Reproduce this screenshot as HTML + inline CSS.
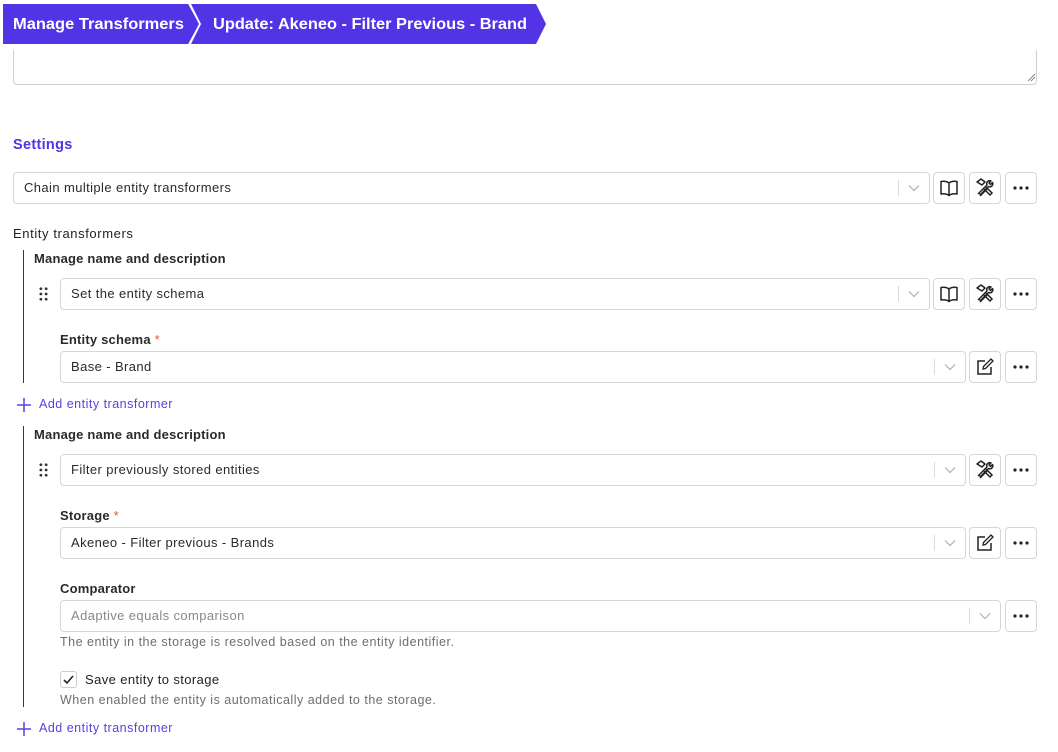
<!DOCTYPE html>
<html><head><meta charset="utf-8"><style>
*{box-sizing:border-box;margin:0;padding:0}
body{width:1058px;height:752px;background:#fff;font-family:"Liberation Sans",sans-serif;color:#222;position:relative;overflow:hidden}
.a{position:absolute}
.sel{position:absolute;height:32px;border:1px solid #d6d6d6;border-radius:4px;background:#fff;font-size:13px;letter-spacing:0.4px;line-height:30px;padding-left:10px;color:#2a2a2a}
.sel .sep{position:absolute;right:30px;top:7px;width:1px;height:16px;background:#dcdcdc}
.sel svg.ch{position:absolute;right:9px;top:11px}
.btn{position:absolute;width:32px;height:32px;border:1px solid #d6d6d6;border-radius:4px;background:#fff;display:flex;align-items:center;justify-content:center}
.lbl{position:absolute;font-size:13px;font-weight:bold;letter-spacing:0.2px;color:#2a2a2a}
.req{color:#e5533d;font-weight:normal}
.help{position:absolute;font-size:12.5px;letter-spacing:0.5px;color:#6e6e6e}
.add{position:absolute;font-size:12.5px;letter-spacing:0.5px;color:#5a3fe0}
.vl{position:absolute;left:23px;width:1px;background:#3a3a3a}
</style></head><body>
<svg class="a" style="left:3px;top:4px" width="545" height="40">
<polygon points="0,0 186,0 196,20 186,40 0,40" fill="#5233e6"/>
<polygon points="188,0 533,0 543,20 533,40 188,40 198,20" fill="#5233e6"/>
<polyline points="186,0 197,20 186,40" fill="none" stroke="#fff" stroke-width="1.5"/>
<text x="10" y="25" fill="#fff" font-family="Liberation Sans" font-weight="bold" font-size="15.5" textLength="171" lengthAdjust="spacingAndGlyphs">Manage Transformers</text>
<text x="210" y="25" fill="#fff" font-family="Liberation Sans" font-weight="bold" font-size="15.5" textLength="314" lengthAdjust="spacingAndGlyphs">Update: Akeneo - Filter Previous - Brand</text>
</svg>
<div class="a" style="left:13px;top:50px;width:1024px;height:35px;border:1px solid #cfcfcf;border-top:none;border-radius:0 0 4px 4px"></div>
<svg class="a" style="left:1027px;top:73px" width="9" height="9"><path d="M1 8L8 1M4 8L8 4" stroke="#888" stroke-width="1"/></svg>
<div class="a" style="left:13px;top:137px;font-size:14.5px;font-weight:bold;letter-spacing:0.3px;color:#5233e6">Settings</div>

<svg width="0" height="0" style="position:absolute"><defs>
<symbol id="chev" viewBox="0 0 12 8"><path d="M1 1.5L6 6.5L11 1.5" fill="none" stroke="#bbb" stroke-width="1.4"/></symbol>
<symbol id="book" viewBox="0 0 20 18"><path d="M10 4C8 2.5 5 2 2 2.5V15C5 14.5 8 15 10 16.5C12 15 15 14.5 18 15V2.5C15 2 12 2.5 10 4ZM10 4V16.5" fill="none" stroke="#222" stroke-width="1.5" stroke-linejoin="round"/></symbol>
<symbol id="tools" viewBox="0 0 20 20"><path d="M3 16L11 8M5 18L13 10M2 4L6 1L10 4L7 7ZM16 3a3 3 0 0 0-4 4L4 15l1.5 1.5 8-8a3 3 0 0 0 4-4l-2 2-1.5-1.5z" fill="none" stroke="#222" stroke-width="1.5" stroke-linejoin="round"/><path d="M9 11l6 6 2-2-6-6" fill="none" stroke="#222" stroke-width="1.5"/></symbol>
<symbol id="dots" viewBox="0 0 16 4"><circle cx="2" cy="2" r="1.6" fill="#222"/><circle cx="8" cy="2" r="1.6" fill="#222"/><circle cx="14" cy="2" r="1.6" fill="#222"/></symbol>
<symbol id="edit" viewBox="0 0 18 18"><path d="M9 3H2V16H15V9" fill="none" stroke="#222" stroke-width="1.5"/><path d="M7 11L7.5 8.5L15 1L17 3L9.5 10.5Z" fill="none" stroke="#222" stroke-width="1.3"/></symbol>
<symbol id="drag" viewBox="0 0 10 16"><circle cx="2" cy="2" r="1.6" fill="#333"/><circle cx="8" cy="2" r="1.6" fill="#333"/><circle cx="2" cy="8" r="1.6" fill="#333"/><circle cx="8" cy="8" r="1.6" fill="#333"/><circle cx="2" cy="14" r="1.6" fill="#333"/><circle cx="8" cy="14" r="1.6" fill="#333"/></symbol>
<symbol id="plus" viewBox="0 0 14 14"><path d="M7 0V14M0 7H14" stroke="#5a3fe0" stroke-width="1.5"/></symbol>
</defs></svg>

<div class="sel" style="left:13px;top:172px;width:917px">Chain multiple entity transformers<span class="sep"></span><svg class="ch" width="12" height="8"><use href="#chev"/></svg></div>
<div class="btn" style="left:933px;top:172px"><svg width="20" height="18"><use href="#book"/></svg></div>
<div class="btn" style="left:969px;top:172px"><svg width="20" height="20"><use href="#tools"/></svg></div>
<div class="btn" style="left:1005px;top:172px"><svg width="16" height="4"><use href="#dots"/></svg></div>

<div class="lbl" style="left:13px;top:226px;font-weight:normal;letter-spacing:0.6px;color:#222">Entity transformers</div>
<div class="vl" style="top:250px;height:133px"></div>
<div class="lbl" style="left:34px;top:251px">Manage name and description</div>
<svg class="a" style="left:39px;top:287px" width="9" height="14"><use href="#drag"/></svg>
<div class="sel" style="left:60px;top:278px;width:870px">Set the entity schema<span class="sep"></span><svg class="ch" width="12" height="8"><use href="#chev"/></svg></div>
<div class="btn" style="left:933px;top:278px"><svg width="20" height="18"><use href="#book"/></svg></div>
<div class="btn" style="left:969px;top:278px"><svg width="20" height="20"><use href="#tools"/></svg></div>
<div class="btn" style="left:1005px;top:278px"><svg width="16" height="4"><use href="#dots"/></svg></div>
<div class="lbl" style="left:60px;top:332px">Entity schema <span class="req">*</span></div>
<div class="sel" style="left:60px;top:351px;width:906px">Base - Brand<span class="sep"></span><svg class="ch" width="12" height="8"><use href="#chev"/></svg></div>
<div class="btn" style="left:969px;top:351px"><svg width="18" height="18"><use href="#edit"/></svg></div>
<div class="btn" style="left:1005px;top:351px"><svg width="16" height="4"><use href="#dots"/></svg></div>
<svg class="a" style="left:17px;top:398px" width="14" height="14"><use href="#plus"/></svg>
<div class="add" style="left:39px;top:397px">Add entity transformer</div>

<div class="vl" style="top:426px;height:281px"></div>
<div class="lbl" style="left:34px;top:427px">Manage name and description</div>
<svg class="a" style="left:39px;top:463px" width="9" height="14"><use href="#drag"/></svg>
<div class="sel" style="left:60px;top:454px;width:906px">Filter previously stored entities<span class="sep"></span><svg class="ch" width="12" height="8"><use href="#chev"/></svg></div>
<div class="btn" style="left:969px;top:454px"><svg width="20" height="20"><use href="#tools"/></svg></div>
<div class="btn" style="left:1005px;top:454px"><svg width="16" height="4"><use href="#dots"/></svg></div>
<div class="lbl" style="left:60px;top:508px">Storage <span class="req">*</span></div>
<div class="sel" style="left:60px;top:527px;width:906px">Akeneo - Filter previous - Brands<span class="sep"></span><svg class="ch" width="12" height="8"><use href="#chev"/></svg></div>
<div class="btn" style="left:969px;top:527px"><svg width="18" height="18"><use href="#edit"/></svg></div>
<div class="btn" style="left:1005px;top:527px"><svg width="16" height="4"><use href="#dots"/></svg></div>
<div class="lbl" style="left:60px;top:581px">Comparator</div>
<div class="sel" style="left:60px;top:600px;width:941px;color:#888">Adaptive equals comparison<span class="sep"></span><svg class="ch" width="12" height="8"><use href="#chev"/></svg></div>
<div class="btn" style="left:1005px;top:600px"><svg width="16" height="4"><use href="#dots"/></svg></div>
<div class="help" style="left:60px;top:635px">The entity in the storage is resolved based on the entity identifier.</div>
<div class="a" style="left:60px;top:671px;width:17px;height:17px;border:1px solid #ccc;border-radius:3px"></div>
<svg class="a" style="left:63px;top:674px" width="11" height="11"><path d="M1 6L4 9L10 2" fill="none" stroke="#222" stroke-width="1.6"/></svg>
<div class="a" style="left:85px;top:672px;font-size:13px;letter-spacing:0.4px;color:#222">Save entity to storage</div>
<div class="help" style="left:60px;top:693px">When enabled the entity is automatically added to the storage.</div>
<svg class="a" style="left:17px;top:722px" width="14" height="14"><use href="#plus"/></svg>
<div class="add" style="left:39px;top:721px">Add entity transformer</div>
</body></html>
